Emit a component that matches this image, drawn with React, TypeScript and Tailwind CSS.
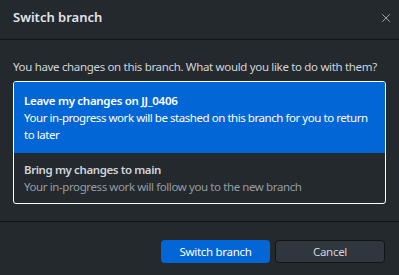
import { X } from "lucide-react";

const App = () => {
  return (
    <div
      className="w-[399px] h-[275px] bg-[#24292e] text-[#d1d5da] flex flex-col text-[11.5px]"
      style={{ fontFamily: '"Noto Sans", "Liberation Sans", sans-serif' }}
    >
      <div className="h-[40px] flex items-start justify-between pt-[7px] pl-[13px] pr-[6px] border-b border-[#141414]">
        <h1 className="text-[13px] leading-[20px] font-semibold text-[#e1e4e8]">
          Switch branch
        </h1>
        <button className="text-[#a3aab1] mt-[4px]">
          <X size={14} strokeWidth={1.6} />
        </button>
      </div>

      <div className="flex-1 px-[13px] pt-[18px] border-b border-[#141414]">
        <p className="leading-[17px] mb-[6px] whitespace-nowrap tracking-[-0.33px]">
          You have changes on this branch. What would you like to do with them?
        </p>
        <div className="rounded-[3px] border border-white overflow-hidden">
          <div className="bg-[#0366d6] pl-[10px] pr-[4px] pt-[10px] pb-[10px] text-white">
            <div className="leading-[17px] font-semibold tracking-[-0.3px]">
              Leave my changes on JJ_0406
            </div>
            <div className="leading-[17px] tracking-[-0.45px]">
              <span className="whitespace-nowrap">
                Your in-progress work will be stashed on this branch for you to return
              </span>
              <br />
              to later
            </div>
          </div>
          <div className="pl-[10px] pr-[6px] pt-[8px] pb-[8px]">
            <div className="leading-[17px] font-semibold text-[#d1d5da] tracking-[-0.4px]">
              Bring my changes to main
            </div>
            <div className="leading-[17px] text-[#959da5] tracking-[-0.4px]">
              Your in-progress work will follow you to the new branch
            </div>
          </div>
        </div>
      </div>

      <div className="h-[53px] flex items-start justify-end gap-[5px] px-[14px] pt-[18px] tracking-[-0.3px]">
        <button className="w-[109px] h-[23px] rounded-[4px] bg-[#0366d6] text-white">
          Switch branch
        </button>
        <button className="w-[110px] h-[23px] rounded-[4px] bg-[#2f363d] border border-[#141414] text-[#d1d5da]">
          Cancel
        </button>
      </div>
    </div>
  );
};

export default App;
